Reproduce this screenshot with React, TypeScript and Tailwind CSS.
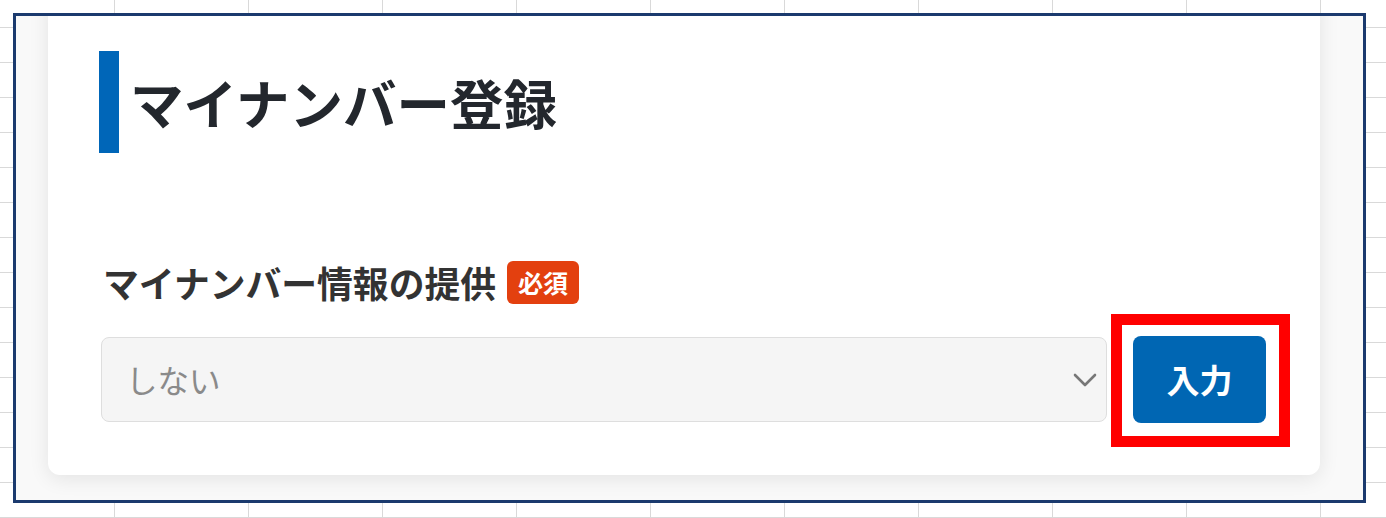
export default function App() {
  return (
    <div
      className="relative h-[518px] w-[1386px] overflow-hidden bg-white bg-[linear-gradient(to_right,#d9d9d9_1px,transparent_1px),linear-gradient(to_bottom,#d9d9d9_1px,transparent_1px)] bg-[size:134px_35px] bg-[position:114px_27px] p-[13px]"
      style={{ fontFamily: '"Noto Sans CJK JP", "Noto Sans", sans-serif' }}
    >
      <div className="h-[490px] w-[1353px] overflow-hidden border-[3px] border-[#1b3a6e] bg-[#f9f9f9]">
        <div className="-mt-[20px] ml-[32px] w-[1272px] rounded-b-xl bg-white pt-[55px] pr-[54px] pb-[52px] pl-[51px] shadow-[0_4px_20px_rgba(0,0,0,0.09)]">
          <div className="flex items-center">
            <div className="h-[102px] w-[20px] bg-[#0066b8]" />
            <h1 className="ml-[11px] text-[53.5px] leading-none font-bold text-[#23272d]">
              マイナンバー登録
            </h1>
          </div>

          <div className="mt-[108px] ml-[4px] flex h-[43px] items-center">
            <span className="text-[35.8px] leading-none font-bold text-[#333]">
              マイナンバー情報の提供
            </span>
            <span className="ml-[11px] flex h-[43px] items-center rounded-[6px] bg-[#e3400f] px-[11px] text-[25px] font-bold text-white">
              必須
            </span>
          </div>

          <div className="mt-[32px] ml-[2px] flex items-center">
            <div className="flex h-[85px] w-[1006px] items-center justify-between rounded-[8px] border border-[#dedede] bg-[#f5f5f5] pr-[9px] pl-[24px]">
              <span className="text-[31.5px] text-[#8a8a8a]">しない</span>
              <svg width="24" height="14" viewBox="0 0 24 14" fill="none">
                <path d="M2 2l10 10L22 2" stroke="#777" strokeWidth="2.6" strokeLinecap="round" strokeLinejoin="round" />
              </svg>
            </div>
            <div className="relative ml-[26px]">
              <button className="flex h-[87px] w-[133px] items-center justify-center rounded-[8px] bg-[#0066b3] text-[33px] font-bold text-white">
                入力
              </button>
              <div className="pointer-events-none absolute -top-[22px] -right-[24px] -bottom-[24px] -left-[22px] border-[11px] border-[#ff0000]" />
            </div>
          </div>
        </div>
      </div>
    </div>
  );
}
